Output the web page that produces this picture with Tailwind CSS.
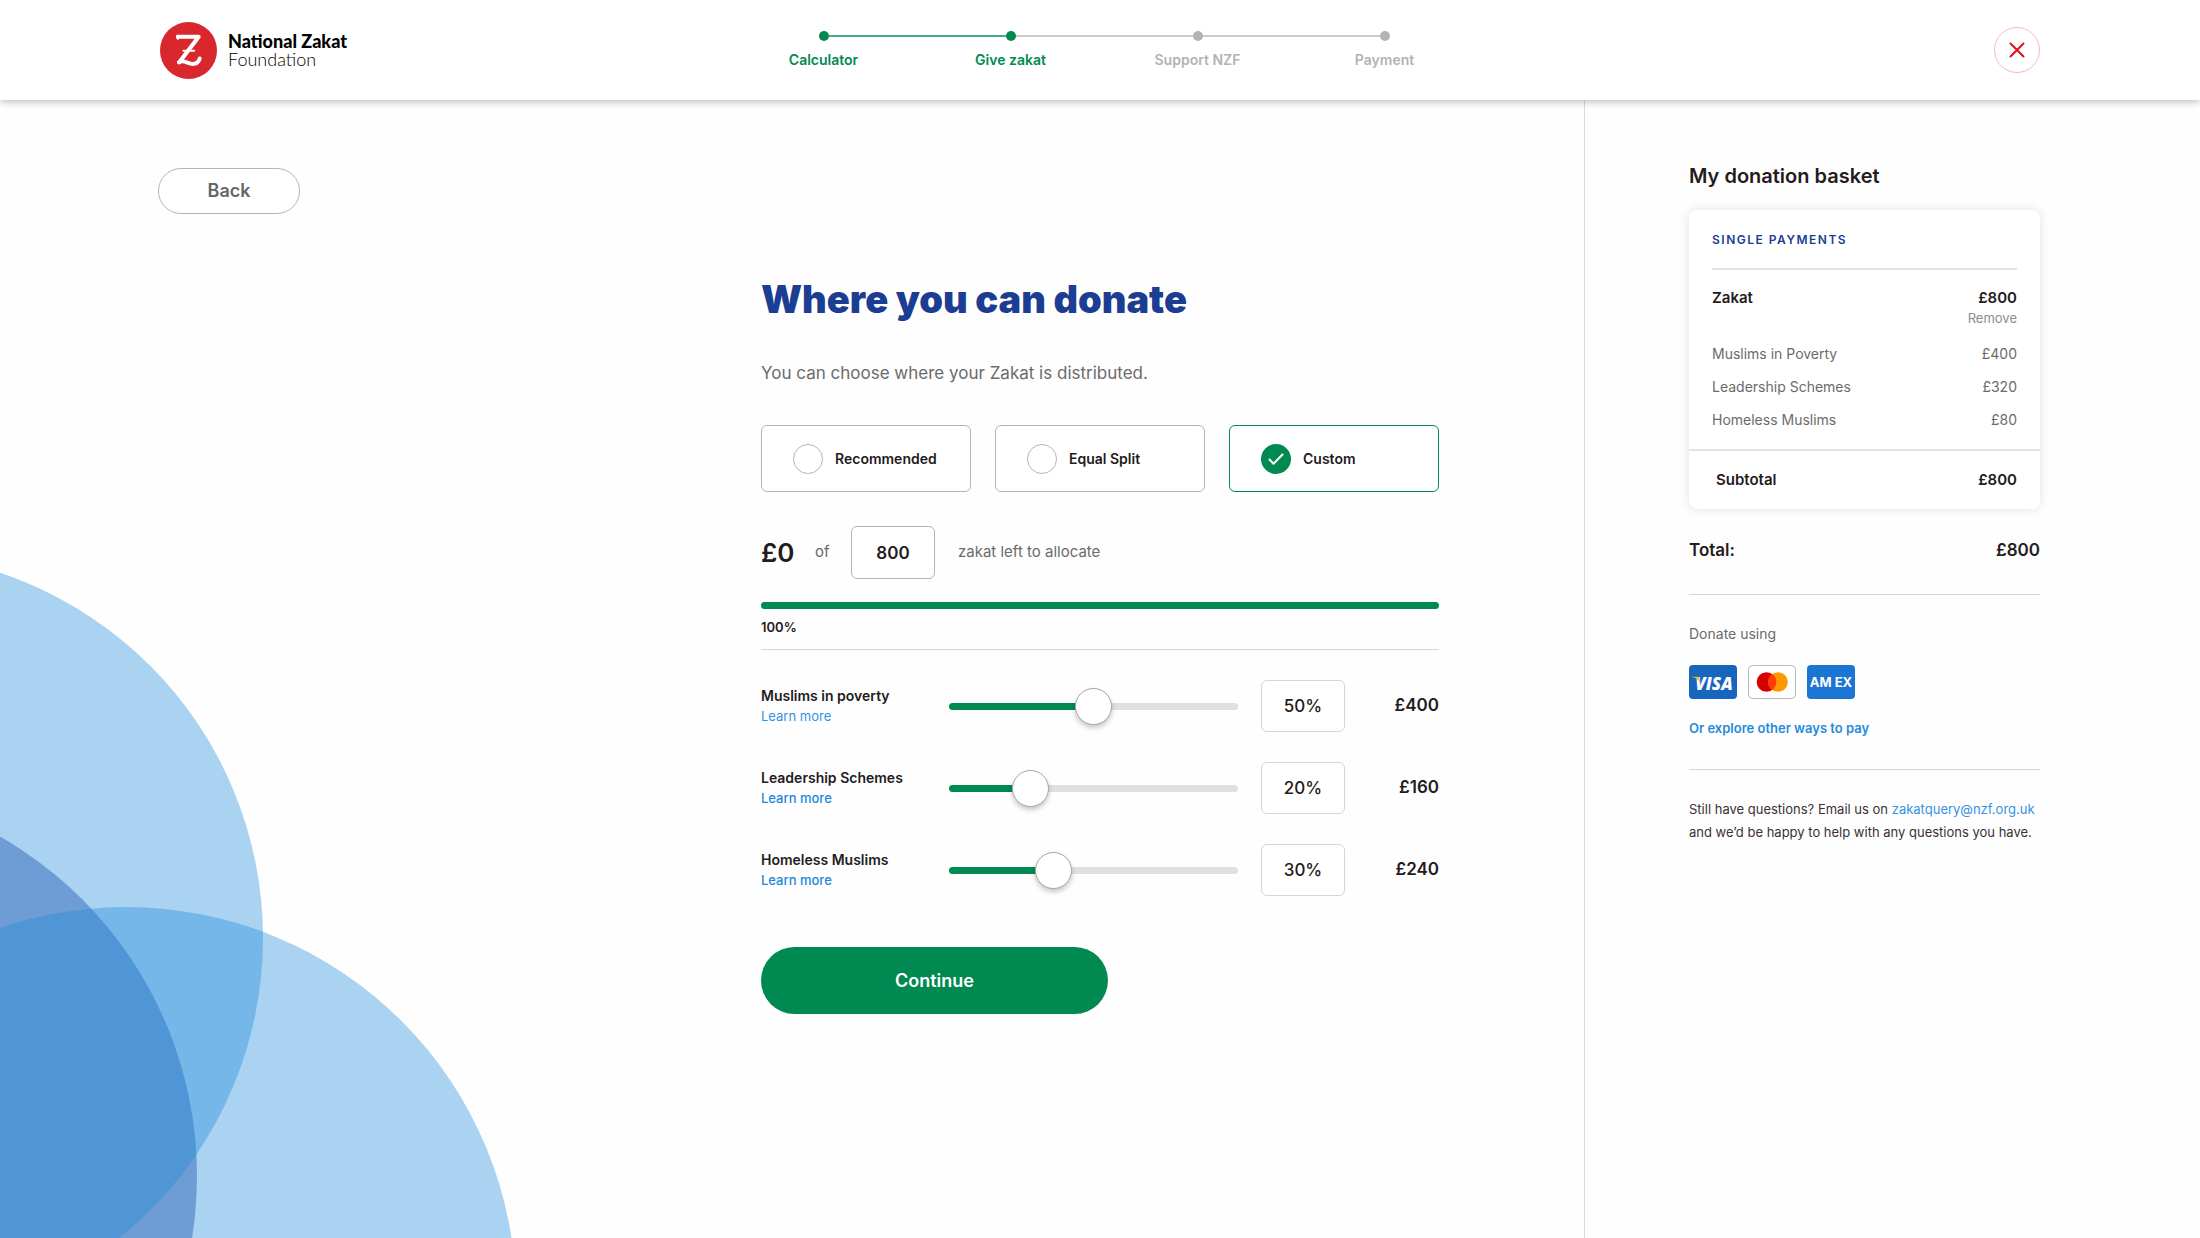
<!DOCTYPE html>
<html lang="en">
<head>
<meta charset="utf-8">
<meta name="viewport" content="width=device-width, initial-scale=1">
<title>Where you can donate – National Zakat Foundation</title>
<script src="https://cdn.jsdelivr.net/npm/@tailwindcss/browser@4"></script>
</head>
<body class="bg-[#fefefe] font-['Inter',sans-serif] text-[#241b1d]">
<div class="relative flex min-h-screen flex-col overflow-hidden">

  <!-- Decorative overlapping circles -->
  <svg class="absolute bottom-0 left-0 h-[670px] w-[520px]" viewBox="0 568 520 670" aria-hidden="true">
    <circle cx="-194" cy="1176" r="391" fill="#9ca8cf"/>
    <circle cx="-122" cy="938" r="385" fill="#1f8adc" fill-opacity=".375"/>
    <circle cx="126" cy="1297" r="390" fill="#1f8adc" fill-opacity=".375"/>
  </svg>

  <header class="relative z-10 grid h-[100px] grid-cols-[570fr_748fr_562fr] items-center bg-white px-40 shadow-[0_2px_7px_rgba(0,0,0,0.25)]">
    <a href="#" class="flex items-center gap-[11px] justify-self-start font-['Lato',sans-serif] text-black">
      <svg class="size-[57px]" viewBox="0 0 56 56" fill="none" aria-hidden="true">
        <circle cx="28" cy="28" r="28" fill="#d9272e"/>
        <g stroke="#fff" stroke-linecap="round" stroke-linejoin="round">
          <path stroke-width="4" d="M17.500 14.500H38L19 39.500"/>
          <path stroke-width="2" d="M17 13.500 17.500 16.500M23 28.200H33.500"/>
          <path stroke-width="3.800" d="M18.500 39.500C24 36.500 28 42 33 41.200C36.500 40.700 38.300 38.500 39 35.800"/>
        </g>
      </svg>
      <span class="flex flex-col text-lg leading-[18px]">
        <b class="font-black">National Zakat</b>
        <span class="font-light">Foundation</span>
      </span>
    </a>

    <ol class="grid grid-cols-4 text-center text-sm leading-5 font-semibold text-[#b3b3b3]">
      <li class="flex flex-col gap-[9px] text-[#008a52]">
        <span class="flex items-center"><i class="h-px flex-1"></i><i class="size-[10px] rounded-full bg-[#008a52]"></i><i class="h-[2px] flex-1 bg-[#4aac83]"></i></span>
        Calculator
      </li>
      <li class="flex flex-col gap-[9px] text-[#008a52]" aria-current="step">
        <span class="flex items-center"><i class="h-[2px] flex-1 bg-[#4aac83]"></i><i class="size-[10px] rounded-full bg-[#008a52]"></i><i class="h-[2px] flex-1 bg-[#cbcbcb]"></i></span>
        Give zakat
      </li>
      <li class="flex flex-col gap-[9px]">
        <span class="flex items-center"><i class="h-[2px] flex-1 bg-[#cbcbcb]"></i><i class="size-[10px] rounded-full bg-[#b3b3b3]"></i><i class="h-[2px] flex-1 bg-[#cbcbcb]"></i></span>
        Support NZF
      </li>
      <li class="flex flex-col gap-[9px]">
        <span class="flex items-center"><i class="h-[2px] flex-1 bg-[#cbcbcb]"></i><i class="size-[10px] rounded-full bg-[#b3b3b3]"></i><i class="h-px flex-1"></i></span>
        Payment
      </li>
    </ol>

    <button type="button" aria-label="Close" class="grid size-[46px] place-items-center justify-self-end rounded-full border border-[#f7b9bb]">
      <svg class="size-4" viewBox="0 0 16 16" fill="none" stroke="#e01019" stroke-width="2" stroke-linecap="round" aria-hidden="true"><path d="M1.500 1.500l13 13M14.500 1.500l-13 13"/></svg>
    </button>
  </header>

  <div class="relative flex flex-1">
    <main class="flex-1 pt-[68px] pr-[145px] pb-16 pl-[158px]">
      <button type="button" class="block h-[46px] w-[142px] rounded-full border border-[#b5b5b5] bg-white text-lg font-semibold text-[#666]">Back</button>

      <form class="mt-[61px] ml-auto flex w-full max-w-[678px] flex-col">
        <h1 class="text-[38px] leading-[48px] font-black text-[#1b3d92]">Where you can donate</h1>
        <p class="mt-[38px] text-[17px] leading-6 text-[#6b6b6b]">You can choose where your Zakat is distributed.</p>

        <div class="mt-10 grid grid-cols-3 gap-6 text-sm font-semibold">
          <label class="flex h-[67px] items-center gap-3 rounded-md border border-[#b5b5b5] bg-white pl-[31px]">
            <input type="radio" name="split" class="size-[30px] appearance-none rounded-full border border-[#b5b5b5]">Recommended
          </label>
          <label class="flex h-[67px] items-center gap-3 rounded-md border border-[#b5b5b5] bg-white pl-[31px]">
            <input type="radio" name="split" class="size-[30px] appearance-none rounded-full border border-[#b5b5b5]">Equal Split
          </label>
          <label class="flex h-[67px] items-center gap-3 rounded-md border border-[#008a52] bg-white pl-[31px]">
            <span class="grid place-items-center">
              <input type="radio" name="split" checked class="col-start-1 row-start-1 size-[30px] appearance-none rounded-full bg-[#008a52]">
              <svg class="pointer-events-none col-start-1 row-start-1 size-4" viewBox="0 0 16 16" fill="none" stroke="#fff" stroke-width="2" stroke-linecap="round" stroke-linejoin="round" aria-hidden="true"><path d="M1.500 8.500l4 4.200L14.500 3.500"/></svg>
            </span>Custom
          </label>
        </div>

        <div class="mt-[34px] flex items-center text-[15px] text-[#6b6b6b]">
          <output class="w-[54px] text-[26px] font-semibold text-[#241b1d]">£0</output>
          <label for="amount" class="w-9">of</label>
          <input id="amount" type="text" value="800" class="h-[53px] w-[84px] rounded-md border border-[#b5b5b5] bg-white text-center text-[17px] font-semibold text-[#241b1d]">
          <span class="ml-[23px]">zakat left to allocate</span>
        </div>

        <div role="progressbar" aria-label="Allocated" aria-valuenow="100" class="mt-[23px] h-[7px] overflow-hidden rounded-full bg-[#e0e0e0]">
          <div class="h-full bg-[#008a52]" style="width:100%"></div>
        </div>
        <p class="mt-2 text-[13px] leading-5 font-semibold">100%</p>
        <hr class="mt-3 border-[#d6d6d6]">

        <div class="mt-[30px] flex flex-col gap-[30px]">
          <div class="flex items-center">
            <div class="flex w-[188px] flex-col items-start leading-5">
              <label for="poverty" class="text-sm leading-5 font-semibold">Muslims in poverty</label>
              <a href="#" class="text-[13px] leading-5 text-[#3493e0]">Learn more</a>
            </div>
            <input id="poverty" type="range" value="50" style="--fill:50%" class="h-[37px] min-w-0 flex-1 appearance-none bg-transparent [&::-webkit-slider-runnable-track]:h-[7px] [&::-webkit-slider-runnable-track]:rounded-full [&::-webkit-slider-runnable-track]:bg-[linear-gradient(to_right,#008a52_var(--fill),#e0e0e0_var(--fill))] [&::-webkit-slider-thumb]:mt-[-15px] [&::-webkit-slider-thumb]:size-[37px] [&::-webkit-slider-thumb]:appearance-none [&::-webkit-slider-thumb]:rounded-full [&::-webkit-slider-thumb]:border [&::-webkit-slider-thumb]:border-solid [&::-webkit-slider-thumb]:border-[#a6a6a6] [&::-webkit-slider-thumb]:bg-white [&::-webkit-slider-thumb]:shadow-[0_3px_5px_rgba(0,0,0,0.22)]">
            <input type="text" value="50%" aria-label="Muslims in poverty share" class="ml-[23px] h-[52px] w-[84px] rounded-md border border-[#d6d6d6] bg-white text-center text-[17px] font-medium">
            <output for="poverty" class="w-[94px] text-right text-[17px] font-semibold">£400</output>
          </div>
          <div class="flex items-center">
            <div class="flex w-[188px] flex-col items-start leading-5">
              <label for="leadership" class="text-sm leading-5 font-semibold">Leadership Schemes</label>
              <a href="#" class="text-[13px] leading-5 font-medium text-[#1f87dc]">Learn more</a>
            </div>
            <input id="leadership" type="range" value="25" style="--fill:25%" class="h-[37px] min-w-0 flex-1 appearance-none bg-transparent [&::-webkit-slider-runnable-track]:h-[7px] [&::-webkit-slider-runnable-track]:rounded-full [&::-webkit-slider-runnable-track]:bg-[linear-gradient(to_right,#008a52_var(--fill),#e0e0e0_var(--fill))] [&::-webkit-slider-thumb]:mt-[-15px] [&::-webkit-slider-thumb]:size-[37px] [&::-webkit-slider-thumb]:appearance-none [&::-webkit-slider-thumb]:rounded-full [&::-webkit-slider-thumb]:border [&::-webkit-slider-thumb]:border-solid [&::-webkit-slider-thumb]:border-[#a6a6a6] [&::-webkit-slider-thumb]:bg-white [&::-webkit-slider-thumb]:shadow-[0_3px_5px_rgba(0,0,0,0.22)]">
            <input type="text" value="20%" aria-label="Leadership Schemes share" class="ml-[23px] h-[52px] w-[84px] rounded-md border border-[#d6d6d6] bg-white text-center text-[17px] font-medium">
            <output for="leadership" class="w-[94px] text-right text-[17px] font-semibold">£160</output>
          </div>
          <div class="flex items-center">
            <div class="flex w-[188px] flex-col items-start leading-5">
              <label for="homeless" class="text-sm leading-5 font-semibold">Homeless Muslims</label>
              <a href="#" class="text-[13px] leading-5 font-medium text-[#1f87dc]">Learn more</a>
            </div>
            <input id="homeless" type="range" value="34" style="--fill:34%" class="h-[37px] min-w-0 flex-1 appearance-none bg-transparent [&::-webkit-slider-runnable-track]:h-[7px] [&::-webkit-slider-runnable-track]:rounded-full [&::-webkit-slider-runnable-track]:bg-[linear-gradient(to_right,#008a52_var(--fill),#e0e0e0_var(--fill))] [&::-webkit-slider-thumb]:mt-[-15px] [&::-webkit-slider-thumb]:size-[37px] [&::-webkit-slider-thumb]:appearance-none [&::-webkit-slider-thumb]:rounded-full [&::-webkit-slider-thumb]:border [&::-webkit-slider-thumb]:border-solid [&::-webkit-slider-thumb]:border-[#a6a6a6] [&::-webkit-slider-thumb]:bg-white [&::-webkit-slider-thumb]:shadow-[0_3px_5px_rgba(0,0,0,0.22)]">
            <input type="text" value="30%" aria-label="Homeless Muslims share" class="ml-[23px] h-[52px] w-[84px] rounded-md border border-[#d6d6d6] bg-white text-center text-[17px] font-medium">
            <output for="homeless" class="w-[94px] text-right text-[17px] font-semibold">£240</output>
          </div>
        </div>

        <button type="submit" class="mt-[51px] h-[67px] w-[347px] rounded-full bg-[#008a52] text-lg font-semibold text-white">Continue</button>
      </form>
    </main>

    <aside class="w-[28%] border-l border-[#d9d9d9] pt-16 pr-40 pb-16 pl-[104px] text-[#6b6b6b]">
      <h2 class="text-xl leading-6 font-semibold text-[#241b1d]">My donation basket</h2>

      <section class="mt-[22px] rounded-lg bg-white shadow-[0_0_10px_rgba(60,60,160,0.16)]">
        <div class="px-[23px] pt-5 pb-[17px]">
          <h3 class="text-xs leading-5 font-semibold tracking-[1.5px] text-[#1b3d92]">SINGLE PAYMENTS</h3>
          <hr class="mt-[18px] border-t-2 border-[#e3e3e3]">
          <div class="mt-[18px] flex justify-between text-[15px] leading-5 font-semibold text-[#241b1d]"><span>Zakat</span><span>£800</span></div>
          <div class="flex justify-end"><button type="button" class="text-[13px] leading-5 text-[#8c8c8c]">Remove</button></div>
          <dl class="mt-[14px] grid grid-cols-[1fr_auto] gap-y-[9px] text-sm leading-6">
            <dt>Muslims in Poverty</dt><dd class="text-right">£400</dd>
            <dt>Leadership Schemes</dt><dd class="text-right">£320</dd>
            <dt>Homeless Muslims</dt><dd class="text-right">£80</dd>
          </dl>
        </div>
        <div class="flex justify-between border-t-2 border-[#e3e3e3] py-[18px] pr-[23px] pl-[27px] text-[15px] leading-[22px] font-semibold text-[#241b1d]"><span>Subtotal</span><span>£800</span></div>
      </section>

      <div class="mt-[29px] flex justify-between text-[17px] leading-6 font-semibold text-[#241b1d]"><span>Total:</span><span>£800</span></div>
      <hr class="mt-8 border-[#d6d6d6]">

      <p class="mt-[29px] text-sm leading-5">Donate using</p>
      <div class="mt-[21px] flex gap-[11px]">
        <svg class="h-[34px] w-12" viewBox="0 0 48 34" role="img" aria-label="Visa">
          <rect width="48" height="34" rx="4" fill="#1766be"/>
          <text x="25" y="24.500" text-anchor="middle" font-family="Open Sans, sans-serif" font-weight="800" font-style="italic" font-size="17" fill="#fff">VISA</text>
          <path d="M3 11.800h5.500c1 0 1.400.5 1.700 1.400l1 4.300C9.500 14.500 7 12.800 3 12z" fill="#f5b81c"/>
        </svg>
        <svg class="h-[34px] w-12" viewBox="0 0 48 34" role="img" aria-label="Mastercard">
          <rect x=".5" y=".5" width="47" height="33" rx="4" fill="#fff" stroke="#b8b8b8"/>
          <circle cx="18.500" cy="17" r="9.800" fill="#d50000"/>
          <circle cx="30" cy="17" r="9.800" fill="#ff9800"/>
          <path d="M24.250 9.060a9.800 9.800 0 0 1 0 15.880a9.800 9.800 0 0 1 0-15.880z" fill="#ff3d00"/>
        </svg>
        <svg class="h-[34px] w-12" viewBox="0 0 48 34" role="img" aria-label="American Express">
          <rect width="48" height="34" rx="4" fill="#1a76d2"/>
          <text x="24" y="21.500" text-anchor="middle" font-family="Inter, sans-serif" font-weight="700" font-size="13" fill="#fff">AM EX</text>
        </svg>
      </div>
      <p class="mt-[19px] text-[13px] leading-5 font-semibold"><a href="#" class="text-[#1f8bdc]">Or explore other ways to pay</a></p>
      <hr class="mt-[31px] border-[#d6d6d6]">

      <p class="mt-7 text-[13px] leading-[23px] text-[#3b3133]">Still have questions? Email us on <a href="mailto:zakatquery@nzf.org.uk" class="text-[#3493e0]">zakatquery@nzf.org.uk</a><br>and we’d be happy to help with any questions you have.</p>
    </aside>
  </div>
</div>
</body>
</html>
